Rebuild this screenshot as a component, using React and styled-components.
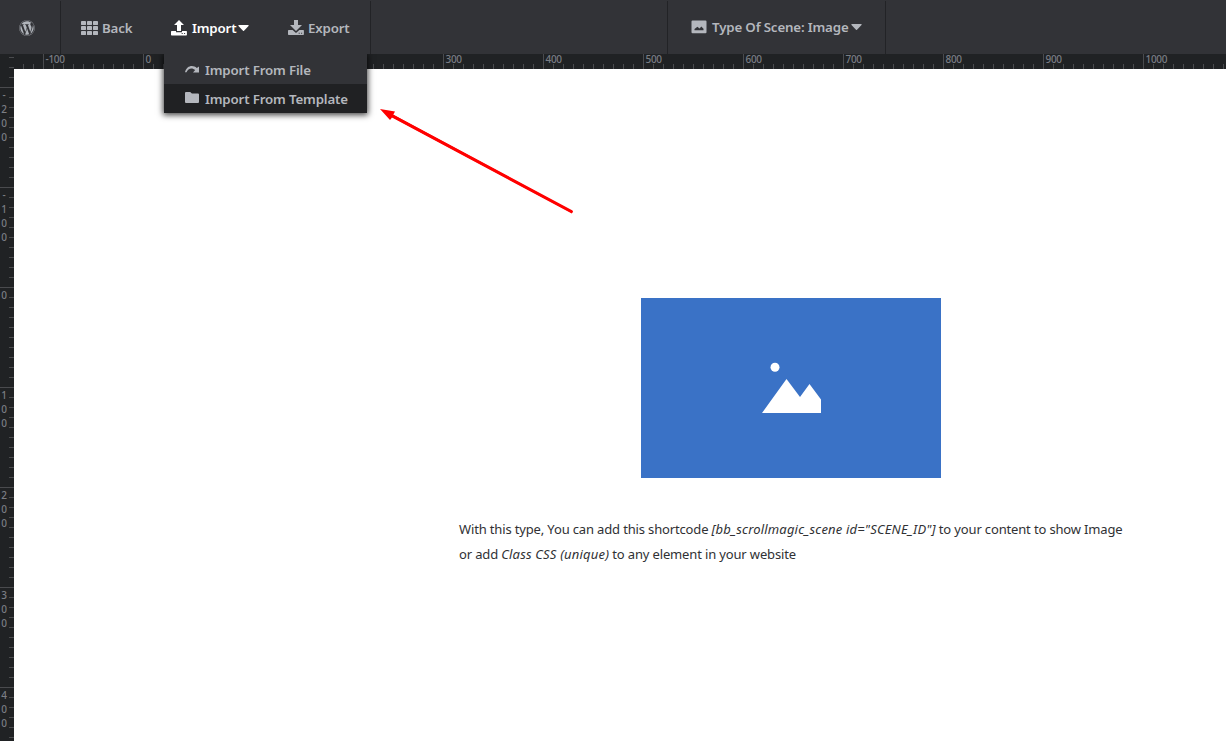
import React from 'react';
import styled, { createGlobalStyle } from 'styled-components';
import { FaWordpress } from 'react-icons/fa';

const GlobalStyle = createGlobalStyle`
  * { box-sizing: border-box; }
  body { margin: 0; background: #fff; overflow: hidden; font-family: "Noto Sans", "Open Sans", sans-serif; }
  svg { display: block; flex: none; }
`;

const Page = styled.div`
  display: flex;
  flex-direction: column;
  height: 741px;
  position: relative;
  overflow: hidden;
`;

const Toolbar = styled.header`
  display: flex;
  flex: none;
  height: 54px;
  padding-top: 1px;
  background: #323337;
`;

const Section = styled.div`
  display: flex;
  width: ${(p) => p.$width}px;
  border-right: 1px solid #222326;
`;

const Logo = styled.div`
  padding: 19px 0 0 19px;
  color: #b0b4ba;
`;

const Item = styled.div`
  display: flex;
  align-items: center;
  height: ${(p) => p.$height || 53}px;
  margin-left: ${(p) => p.$left}px;
  color: ${(p) => (p.$active ? '#fff' : '#b4b7bd')};
`;

const Label = styled.span`
  width: ${(p) => p.$width}px;
  margin-left: ${(p) => p.$gap || 5}px;
  font-size: 13.3px;
  font-weight: 600;
  line-height: 20px;
  letter-spacing: -0.16px;
  white-space: nowrap;
`;

const Spacer = styled.div`
  width: 297px;
  border-right: 1px solid #222326;
`;

const Menu = styled.div`
  position: absolute;
  z-index: 3;
  left: 164px;
  top: 54px;
  width: 203px;
  height: 59px;
  background: #202123;
  box-shadow: 0 1px 6px 1px rgba(0, 0, 0, 0.75);
  clip-path: inset(0 -10px -10px -10px);
`;

const MenuItem = styled.div`
  display: flex;
  align-items: center;
  height: ${(p) => p.$height}px;
  padding: ${(p) => (p.$raised ? 2 : 0)}px 0 0 21px;
  color: #b4b7bd;
  background: ${(p) => (p.$raised ? '#323337' : '#202123')};
`;

const Body = styled.div`
  display: flex;
  flex: 1;
  min-height: 0;
`;

const SideRuler = styled.div`
  flex: none;
  width: 14px;
  padding-top: 33px;
  overflow: hidden;
  background:
    repeating-linear-gradient(to bottom, transparent 0 3px, #4a4b4e 3px 4px, transparent 4px 10px) right top / 5px 100% no-repeat,
    #202224;
`;

const SideMark = styled.div`
  height: 100px;
  width: 14px;
  padding: 0 6px 0 0;
  border-top: 1px solid #4a4b4e;
  color: #7b7e84;
  font-size: 10px;
  font-weight: 500;
  line-height: 14px;
  text-align: center;
`;

const Digit = styled.div`
  height: 14px;
`;

const Main = styled.main`
  display: flex;
  flex-direction: column;
  flex: 1;
  min-width: 0;
`;

const TopRuler = styled.div`
  display: flex;
  flex: none;
  height: 15px;
  padding-left: 29px;
  background:
    repeating-linear-gradient(to right, transparent 0 9px, #4a4b4e 9px 10px) left bottom / 100% 5px no-repeat,
    #202224;
`;

const TopMark = styled.div`
  flex: none;
  width: 100px;
  padding-left: 1.5px;
  border-left: 1px solid #4a4b4e;
  color: #7b7e84;
  font-size: 10px;
  font-weight: 500;
  line-height: 11px;
  letter-spacing: -0.3px;
`;

const Canvas = styled.div`
  display: flex;
  flex-direction: column;
  align-items: center;
  flex: 1;
  padding: 229px 0 0 342px;
  background: #fff;
`;

const ImageCard = styled.div`
  display: flex;
  width: 300px;
  height: 180px;
  padding: 64px 0 0 121px;
  background: #3a72c6;
`;

const Note = styled.p`
  width: 664px;
  margin: 39px 0 0;
  color: #303134;
  font-size: 13px;
  font-weight: 400;
  line-height: 25px;
`;

const Line = styled.span`
  display: block;
  white-space: nowrap;
  letter-spacing: -0.15px;

  em {
    letter-spacing: 0.18px;
  }
`;

const Arrow = styled.svg`
  position: absolute;
  left: 370px;
  top: 100px;
`;

const GridIcon = () => (
  <svg width="17" height="14" viewBox="0 0 17 14" fill="currentColor">
    {[0, 5, 10].map((y) => [0, 6, 12].map((x) => (
      <rect key={`${x}-${y}`} x={x} y={y} width="5" height="4" rx=".4" />
    )))}
  </svg>
);

const TransferIcon = ({ down }) => (
  <svg width="16" height="16" viewBox="0 0 16 16" fill="currentColor">
    {down
      ? <path d="M6 0h4v5h4L8 11 2 5h4z" />
      : <path d="M8 0l5 5H10v6H6V5H3z" />}
    <path fillRule="evenodd" d={down
      ? 'M.6 10h4L8 13l3.4-3h4l.5.6v3.8l-.6.6H.6L0 14.4v-3.8zM10.7 12.7v1h1v-1zm2.4 0v1h1v-1z'
      : 'M.6 11H5v1.2h6V11h4.4l.5.6v3.3l-.6.6H.6L0 14.9v-3.3zM10.7 13v1h1v-1zm2.4 0v1h1v-1z'} />
  </svg>
);

const Caret = () => (
  <svg width="11" height="6" viewBox="0 0 11 6" fill="currentColor">
    <path d="M.8 0h9.4q.8.2.3 1L6 5.8q-.5.4-1 0L.5 1Q0 .2.8 0z" />
  </svg>
);

const PictureIcon = () => (
  <svg width="16" height="14" viewBox="0 0 16 14" fill="currentColor">
    <path fillRule="evenodd" d="M1.5.5h13q1 0 1 1v10.700q0 1-1 1h-13q-1 0-1-1V1.500q0-1 1-1zM3.500 10.200h9V8.800L10.300 6.500 8.600 8.500 6.400 6.800 3.500 9z" />
  </svg>
);

const RedoIcon = () => (
  <svg width="14" height="8" viewBox="0 0 14 8" fill="currentColor">
    <path d="M0 6.300C1.500-.5 8-1.500 11.800 2L14 .6V6.500H8L10.200 4C7 1.200 3 2.200 1.500 6.300z" />
  </svg>
);

const FolderIcon = () => (
  <svg width="14" height="14" viewBox="0 0 14 14" fill="currentColor">
    <path d="M1 0h4.200l1.700 1.500H13q1 0 1 1V10q0 1-1 1H1q-1 0-1-1V1q0-1 1-1z" />
  </svg>
);

const topMarks = ['-100', '0', '', '', '300', '400', '500', '600', '700', '800', '900', '1000'];
const sideMarks = ['-200', '-100', '0', '100', '200', '300', '400'];

export default function App() {
  return (
    <Page>
      <GlobalStyle />
      <Toolbar>
        <Section $width={61}>
          <Logo><FaWordpress size={16} /></Logo>
        </Section>
        <Section $width={310}>
          <Item $left={20}><GridIcon /><Label $width={31} $gap={4}>Back</Label></Item>
          <Item $left={38} $active>
            <TransferIcon /><Label $width={46} $gap={5}>Import</Label><Caret />
          </Item>
          <Item $left={39}><TransferIcon down /><Label $width={43} $gap={4}>Export</Label></Item>
        </Section>
        <Spacer />
        <Section $width={218}>
          <Item $left={23} $height={52}>
            <PictureIcon /><Label $width={139}>Type Of Scene: Image</Label><Caret />
          </Item>
        </Section>
      </Toolbar>
      <Menu>
        <MenuItem $height={30} $raised><RedoIcon /><Label $gap={6}>Import From File</Label></MenuItem>
        <MenuItem $height={29}><FolderIcon /><Label $gap={6}>Import From Template</Label></MenuItem>
      </Menu>
      <Body>
        <SideRuler>
          {sideMarks.map((mark) => (
            <SideMark key={mark}>
              {mark.split('').map((c, i) => <Digit key={i}>{c}</Digit>)}
            </SideMark>
          ))}
        </SideRuler>
        <Main>
          <TopRuler>{topMarks.map((m, i) => <TopMark key={i}>{m}</TopMark>)}</TopRuler>
          <Canvas>
            <ImageCard>
              <svg width="60" height="52" viewBox="0 0 60 52" fill="#fff">
                <circle cx="13" cy="5.300" r="4.500" />
                <path d="M0 51L24.500 17 38 35 47.500 22 59 37.500V51z" />
              </svg>
            </ImageCard>
            <Note>
              <Line>With this type, You can add this shortcode <em>[bb_scrollmagic_scene id="SCENE_ID"]</em> to your content to show Image</Line>
              <Line>or add <em>Class CSS (unique)</em> to any element in your website</Line>
            </Note>
          </Canvas>
        </Main>
      </Body>
      <Arrow width="210" height="120" viewBox="0 0 210 120" fill="#f00">
        <path d="M10 9l15 2.500-1.800 3.200L203 111.500 201.800 113.500 22 17.500 20 20z" />
        <path d="M22 15.500L201.500 111.300" stroke="#f00" strokeWidth="2.600" strokeLinecap="round" />
      </Arrow>
    </Page>
  );
}
